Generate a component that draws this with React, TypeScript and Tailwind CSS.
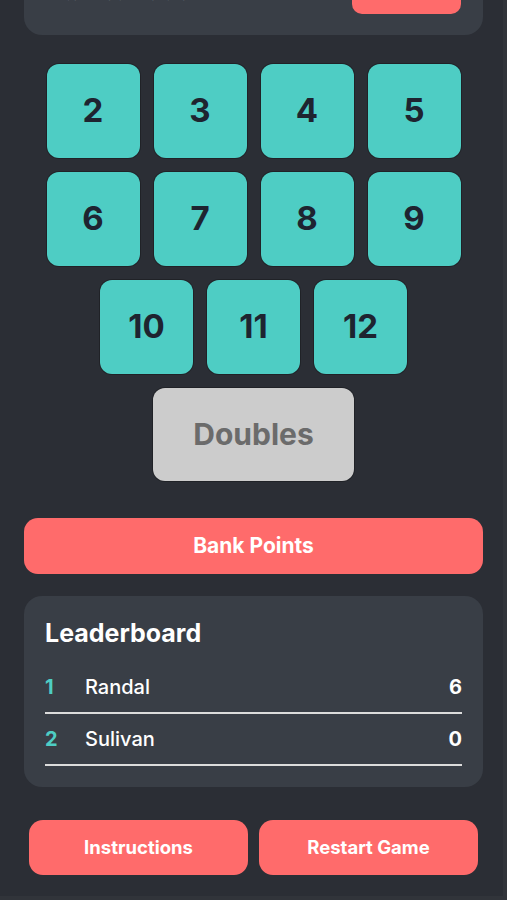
import React from "react";

const font = { fontFamily: "Inter, 'Noto Sans', sans-serif" };

function Tile({ n }: { n: number }) {
  return (
    <button className="w-[93px] h-[94px] rounded-[12px] bg-[#4ecdc4] text-[#1e2430] text-[33px] font-bold flex items-center justify-center shadow-[0_0_0_1px_rgba(0,0,0,0.25)]">
      {n}
    </button>
  );
}

export default function App() {
  const players = [
    { rank: 1, name: "Randal", score: 6 },
    { rank: 2, name: "Sulivan", score: 0 },
  ];
  return (
    <div
      className="h-[900px] w-[507px] overflow-hidden bg-[#2b2e35] shadow-[inset_-4px_-4px_0_#31343a]"
      style={font}
    >
      <div className="px-6">
        <div className="mt-[-60px] h-[95px] rounded-[18px] bg-[#393e46] flex items-end justify-between pl-[40px] pr-[22px] pb-[21px]">
          <span className="text-[15px] text-[#9aa0a8] leading-[20px] mb-[12px]">gyp jpyg pjqy gpy</span>
          <div className="w-[109px] h-[40px] rounded-[10px] bg-[#ff6b6b]" />
        </div>

        <div className="mt-[29px] flex flex-col items-center gap-[14px]">
          <div className="flex gap-[14px]">
            {[2, 3, 4, 5].map((n) => (
              <Tile key={n} n={n} />
            ))}
          </div>
          <div className="flex gap-[14px]">
            {[6, 7, 8, 9].map((n) => (
              <Tile key={n} n={n} />
            ))}
          </div>
          <div className="flex gap-[14px]">
            {[10, 11, 12].map((n) => (
              <Tile key={n} n={n} />
            ))}
          </div>
          <button className="w-[201px] h-[93px] rounded-[12px] bg-[#cccccc] text-[#6b6b6b] text-[30px] font-bold shadow-[0_0_0_1px_rgba(0,0,0,0.25)]">
            Doubles
          </button>
        </div>

        <button className="mt-[37px] w-full h-[56px] rounded-[14px] bg-[#ff6b6b] text-white text-[21px] font-bold">
          Bank Points
        </button>

        <div className="mt-[22px] rounded-[18px] bg-[#393e46] px-[21px] pt-[22px] pb-[21px]">
          <h2 className="text-white text-[25px] font-bold leading-[30px]">Leaderboard</h2>
          <div className="mt-[14px]">
            {players.map((p) => (
              <div key={p.rank} className="flex items-center h-[52px] border-b-2 border-[#dcdcdc] text-[20px]">
                <span className="w-[40px] text-[#4ecdc4] font-bold">{p.rank}</span>
                <span className="flex-1 text-white font-medium">{p.name}</span>
                <span className="text-white font-bold">{p.score}</span>
              </div>
            ))}
          </div>
        </div>

        <div className="mt-[33px] px-[5px] flex gap-[11px]">
          <button className="flex-1 h-[55px] rounded-[14px] bg-[#ff6b6b] text-white text-[18.5px] font-bold">
            Instructions
          </button>
          <button className="flex-1 h-[55px] rounded-[14px] bg-[#ff6b6b] text-white text-[18.5px] font-bold">
            Restart Game
          </button>
        </div>
      </div>
    </div>
  );
}
